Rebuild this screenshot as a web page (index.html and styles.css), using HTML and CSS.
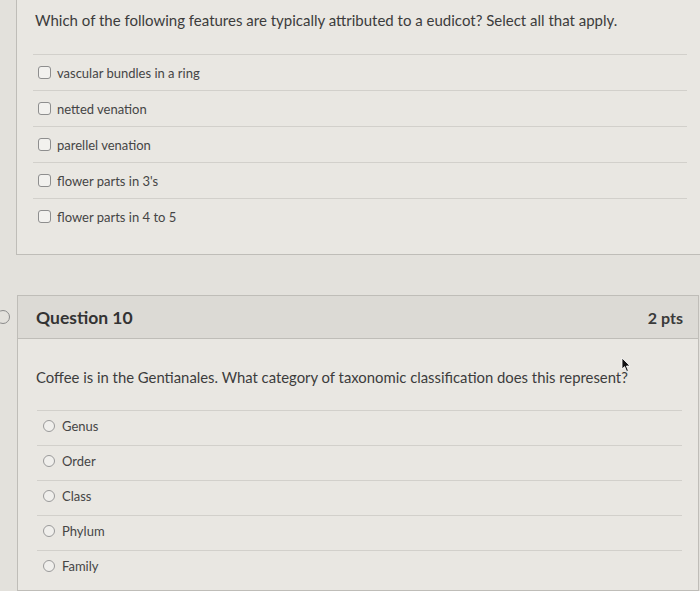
FILE: index.html
```html
<!DOCTYPE html>
<html lang="en">
<head>
  <meta charset="UTF-8" />
  <meta name="viewport" content="width=device-width, initial-scale=1.0" />
  <title>Quiz</title>
  <link rel="stylesheet" href="styles.css">
</head>
<body>
  <div class="page">
    <!-- previous question, scrolled so its header is off screen -->
    <div class="question question-prev">
      <div class="question-body">
        <p class="question-text">Which of the following features are typically attributed to a eudicot? Select all that apply.</p>
        <div class="answers">
          <label class="answer"><span class="check"></span>vascular bundles in a ring</label>
          <label class="answer"><span class="check"></span>netted venation</label>
          <label class="answer"><span class="check"></span>parellel venation</label>
          <label class="answer"><span class="check"></span>flower parts in 3's</label>
          <label class="answer"><span class="check"></span>flower parts in 4 to 5</label>
        </div>
      </div>
    </div>

    <div class="question question-10">
      <span class="flag"></span>
      <div class="question-header">
        <h2>Question 10</h2>
        <span class="points">2 pts</span>
      </div>
      <div class="question-body">
        <p class="question-text">Coffee is in the Gentianales. What category of taxonomic classification does this represent?</p>
        <svg class="cursor" width="10" height="16" viewBox="0 0 10 16">
          <path d="M1 1 L1 12 L3.6 9.6 L5.6 14.5 L7.4 13.7 L5.4 9 L9 9 Z" fill="#111" stroke="#fff" stroke-width="0.8"/>
        </svg>
        <div class="answers">
          <label class="answer"><span class="radio"></span>Genus</label>
          <label class="answer"><span class="radio"></span>Order</label>
          <label class="answer"><span class="radio"></span>Class</label>
          <label class="answer"><span class="radio"></span>Phylum</label>
          <label class="answer"><span class="radio"></span>Family</label>
        </div>
      </div>
    </div>
  </div>
</body>
</html>
```

FILE: styles.css
```css
body {
  margin: 0;
  padding: 0;
  background: #e3e1dc;
  font-family: Lato, "Open Sans", sans-serif;
  color: #3b3b3b;
  overflow: hidden;
}

.page {
  padding-left: 16px;
  width: 684px;
}

.question {
  background: #e9e7e2;
  border: 1px solid #bfbdb8;
  box-sizing: border-box;
}

.question-prev {
  border-top: none;
  border-right: none;
  margin-right: -20px;
  height: 255px;
}

.question-prev .question-body {
  padding: 10px 33px 0 16px;
}

.question-prev .question-text {
  margin: 0 0 24px 2px;
}

.question-prev .answer {
  height: 36px;
}

.question-10 {
  position: relative;
  margin-top: 40px;
  margin-left: 1px;
  width: 682px;
  height: 296px;
}

.flag {
  position: absolute;
  left: -22px;
  top: 14px;
  width: 12px;
  height: 12px;
  border: 1.5px solid #8a8a8a;
  border-radius: 50%;
}

.question-header {
  display: flex;
  justify-content: space-between;
  align-items: center;
  height: 42px;
  padding: 0 15px 0 18px;
  background: #dcdad5;
  border-bottom: 1px solid #bfbdb8;
}

h2 {
  margin: 0;
  font-size: 17.5px;
  font-weight: bold;
  color: #333;
}

.points {
  font-size: 16px;
  font-weight: bold;
  color: #3a3a3a;
}

.question-10 .question-body {
  position: relative;
  padding: 28px 16px 0 19px;
}

.question-10 .question-text {
  margin: 0 0 23px -1px;
  font-size: 14.85px;
}

.question-10 .answer {
  height: 35px;
  padding-bottom: 4px;
}

.question-text {
  font-size: 15px;
  line-height: 20px;
  color: #3c3c3c;
}

.answers {
  display: flex;
  flex-direction: column;
}

.answer {
  display: flex;
  align-items: center;
  border-top: 1px solid #d2d0cb;
  font-size: 13px;
  color: #454545;
  padding-left: 5px;
  box-sizing: border-box;
}

.check {
  width: 11px;
  height: 11px;
  border: 1.5px solid #8e8e8e;
  border-radius: 3px;
  margin-right: 6px;
  background: #f2f1ee;
}

.radio {
  width: 10px;
  height: 10px;
  border: 1.2px solid #9a9a9a;
  border-radius: 50%;
  margin-left: 1px;
  margin-right: 7px;
  background: #f0efec;
}

.cursor {
  position: absolute;
  left: 603px;
  top: 18px;
}
```
